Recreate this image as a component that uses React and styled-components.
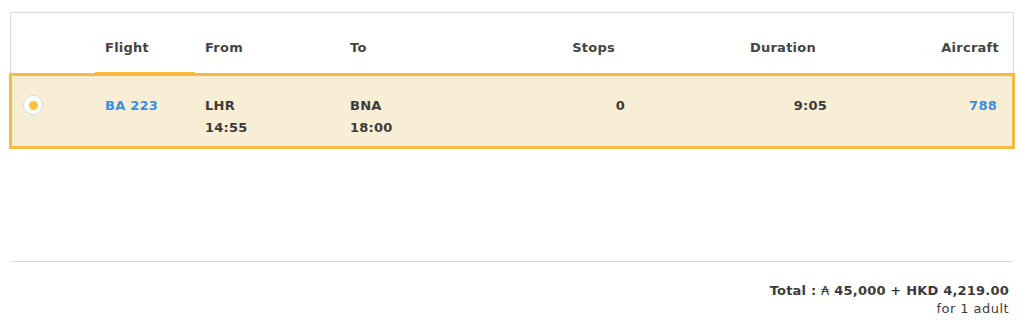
import React from 'react';
import styled, { createGlobalStyle } from 'styled-components';

const GlobalStyle = createGlobalStyle`
  body {
    margin: 0;
    background: #fff;
    font-family: "DejaVu Sans", Verdana, sans-serif;
    color: #3b3b3b;
  }
`;

const Page = styled.div`
  padding: 12px 11px 0 10px;
`;

const Header = styled.div`
  display: grid;
  grid-template-columns: ${p => p.$lead}px 100px 145px 145px 150px 202px 1fr;
  height: 60px;
  border: 1px solid #d9d9d9;
  border-bottom: none;
`;

const HeadCell = styled.div`
  position: relative;
  display: flex;
  align-items: flex-end;
  justify-content: ${p => (p.$right ? 'flex-end' : 'flex-start')};
  padding: 0 ${p => p.$pr || 0}px 15px ${p => (p.$right ? 0 : 10)}px;
  font-size: 13px;
  font-weight: bold;
  letter-spacing: 0.25px;
  line-height: 20px;
  color: #444;

  ${p => p.$active && `
    &::after {
      content: '';
      position: absolute;
      left: 0;
      right: 0;
      bottom: -2px;
      height: 3px;
      background: #f7bb42;
      z-index: 2;
    }
  `}
`;

const FlightRow = styled.div`
  display: grid;
  grid-template-columns: ${p => p.$lead}px 100px 145px 145px 150px 202px 1fr;
  margin: 0 -1px;
  padding: 22px 0 10px;
  background: ${p => (p.$selected ? '#f8eed5' : '#fff')};
  box-shadow: ${p => (p.$selected ? 'inset 0 0 0 3px #f7bb42' : 'none')};
`;

const Cell = styled.div`
  padding: 0 ${p => p.$pr || 0}px 0 ${p => (p.$right ? 0 : 10)}px;
  text-align: ${p => (p.$right ? 'right' : 'left')};
  font-size: 13px;
  font-weight: bold;
  letter-spacing: 0.25px;
  line-height: 22px;
  color: ${p => (p.$link ? '#3a8ee3' : '#3b3b3b')};
`;

const RadioCell = styled.div`
  padding-left: 14px;
  height: 22px;
  margin-top: -1px;
  display: flex;
  align-items: center;
`;

const Radio = styled.span`
  width: 20px;
  height: 20px;
  box-sizing: border-box;
  border: 1px solid #dcdcdc;
  border-radius: 50%;
  background: #fff;
  display: flex;
  align-items: center;
  justify-content: center;

  &::before {
    content: '';
    width: 9px;
    height: 9px;
    border-radius: 50%;
    background: ${p => (p.$checked ? '#f8c238' : 'transparent')};
  }
`;

const Divider = styled.div`
  margin-top: 112px;
  border-top: 1px solid #dcdcdc;
  margin-right: 1px;
`;

const Summary = styled.div`
  padding: 20px 5px 0 0;
  text-align: right;
  font-size: 13px;
  line-height: 18px;
  color: #3b3b3b;
`;

const Total = styled.div`
  font-weight: bold;
  letter-spacing: 0.2px;
`;

const Avios = styled.span`
  font-weight: normal;
`;

const Travellers = styled.div`
  letter-spacing: 0.45px;
`;

export default function App() {
  return (
    <>
      <GlobalStyle />
      <Page>
        <Header $lead={84}>
          <HeadCell />
          <HeadCell $active>Flight</HeadCell>
          <HeadCell>From</HeadCell>
          <HeadCell>To</HeadCell>
          <HeadCell $right $pr={20}>Stops</HeadCell>
          <HeadCell $right $pr={21}>Duration</HeadCell>
          <HeadCell $right $pr={14}>Aircraft</HeadCell>
        </Header>

        <FlightRow $lead={86} $selected>
          <RadioCell>
            <Radio $checked />
          </RadioCell>
          <Cell $link>BA 223</Cell>
          <Cell>
            LHR
            <br />
            14:55
          </Cell>
          <Cell>
            BNA
            <br />
            18:00
          </Cell>
          <Cell $right $pr={10}>0</Cell>
          <Cell $right $pr={10}>9:05</Cell>
          <Cell $right $link $pr={18}>788</Cell>
        </FlightRow>

        <Divider />

        <Summary>
          <Total>
            Total : <Avios>₳</Avios> 45,000 + HKD 4,219.00
          </Total>
          <Travellers>for 1 adult</Travellers>
        </Summary>
      </Page>
    </>
  );
}
